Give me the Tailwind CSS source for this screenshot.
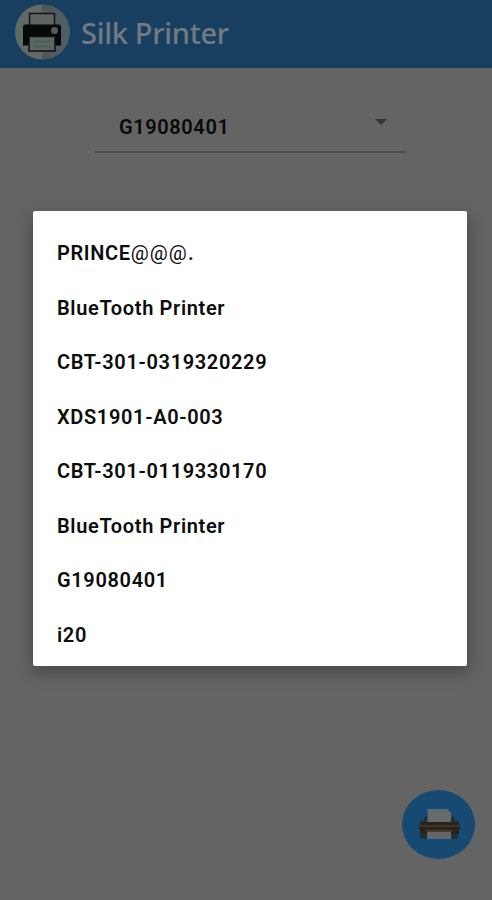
<!DOCTYPE html>
<html lang="en">
<head>
  <meta charset="UTF-8" />
  <meta name="viewport" content="width=device-width, initial-scale=1.0" />
  <title>Silk Printer</title>
  <script src="https://cdn.jsdelivr.net/npm/@tailwindcss/browser@4"></script>
</head>
<body class="relative h-screen overflow-hidden bg-[#646464] font-['Roboto',sans-serif] text-black">
  <div class="flex h-full flex-col">
    <!-- App bar -->
    <header class="flex h-[68px] shrink-0 items-start bg-[#193f60] pl-[14px]">
      <svg class="mt-[4px] h-14 w-14" viewBox="0 0 56 56">
        <defs>
          <linearGradient id="disc" x1="0" x2="1">
            <stop offset="0" stop-color="#5d6a68" />
            <stop offset=".47" stop-color="#646a68" />
            <stop offset=".5" stop-color="#535955" />
            <stop offset="1" stop-color="#4f6069" />
          </linearGradient>
        </defs>
        <circle cx="28.5" cy="28" r="27.5" fill="url(#disc)" />
        <rect x="15.500" y="9.500" width="25" height="14" fill="#5f6463" stroke="#141414" stroke-width="1.500" />
        <path d="M11 20.500h34q2 0 2 2v19h-38v-19q0-2 2-2z" fill="#070808" />
        <circle cx="40.500" cy="26.500" r="3.500" fill="#565a5a" />
        <rect x="15" y="32.500" width="26" height="14.500" fill="#5c6765" stroke="#101010" stroke-width="1.500" />
        <path d="M19 37.500h18M19 42.500h18" stroke="#4b5957" stroke-width="1.500" />
      </svg>
      <h1 class="mt-[12px] ml-[11px] font-['Noto_Sans',sans-serif] text-[29px] leading-[42px] font-medium tracking-[-0.3px] whitespace-nowrap text-[#727b84]">Silk Printer</h1>
    </header>

    <!-- Printer selector -->
    <div class="mt-[33px] ml-[95px] flex h-[52px] w-[311px] items-center justify-between border-b-2 border-[#4d4d4d] pr-[19px] pl-6">
      <span class="mt-[2px] text-[20px] leading-6 font-semibold tracking-[0.6px] text-[#0a0a0a]">G19080401</span>
      <svg class="mb-[8px] h-[6px] w-3" viewBox="0 0 12 6"><path d="M0 0h12L6 6z" fill="#333" /></svg>
    </div>

    <!-- Print button -->
    <button class="mt-auto mr-[17px] mb-[41px] h-[69px] w-[73px] self-end rounded-[50%] bg-[#164a73]">
      <svg class="h-full w-full" viewBox="0 0 73 69">
        <path d="M18 31h4v-4h3v-4h23v4h5v4h3v18H18z" fill="#1f2f3c" />
        <path d="M25.500 19h20l3.500 4v12H25.500z" fill="#666b6e" />
        <path d="M18 32h39v4h1v3h-1v5H18v-5h-1v-3h1z" fill="#29231b" />
        <path d="M18 36h39" stroke="#3c3425" stroke-width="2" />
        <rect x="24" y="40" width="26" height="2" fill="#443c2b" />
        <rect x="25" y="42" width="24" height="7" fill="#626669" />
      </svg>
    </button>
  </div>

  <!-- Device list -->
  <ul class="absolute top-[211px] left-[33px] h-[455px] w-[434px] rounded-[2px] bg-white pt-[15px] text-[20px] font-semibold tracking-[0.65px] text-[#0c0c0c] shadow-[0_6px_16px_2px_rgba(0,0,0,0.25)]">
    <li class="flex h-[54.5px] items-center pl-6">PRINCE<span class="font-normal tracking-[1.1px]">@@@</span>.</li>
    <li class="flex h-[54.5px] items-center pl-6">BlueTooth Printer</li>
    <li class="flex h-[54.5px] items-center pl-6">CBT-301-0319320229</li>
    <li class="flex h-[54.5px] items-center pl-6">XDS1901-A0-003</li>
    <li class="flex h-[54.5px] items-center pl-6">CBT-301-0119330170</li>
    <li class="flex h-[54.5px] items-center pl-6">BlueTooth Printer</li>
    <li class="flex h-[54.5px] items-center pl-6">G19080401</li>
    <li class="flex h-[54.5px] items-center pl-6">i20</li>
  </ul>
</body>
</html>
